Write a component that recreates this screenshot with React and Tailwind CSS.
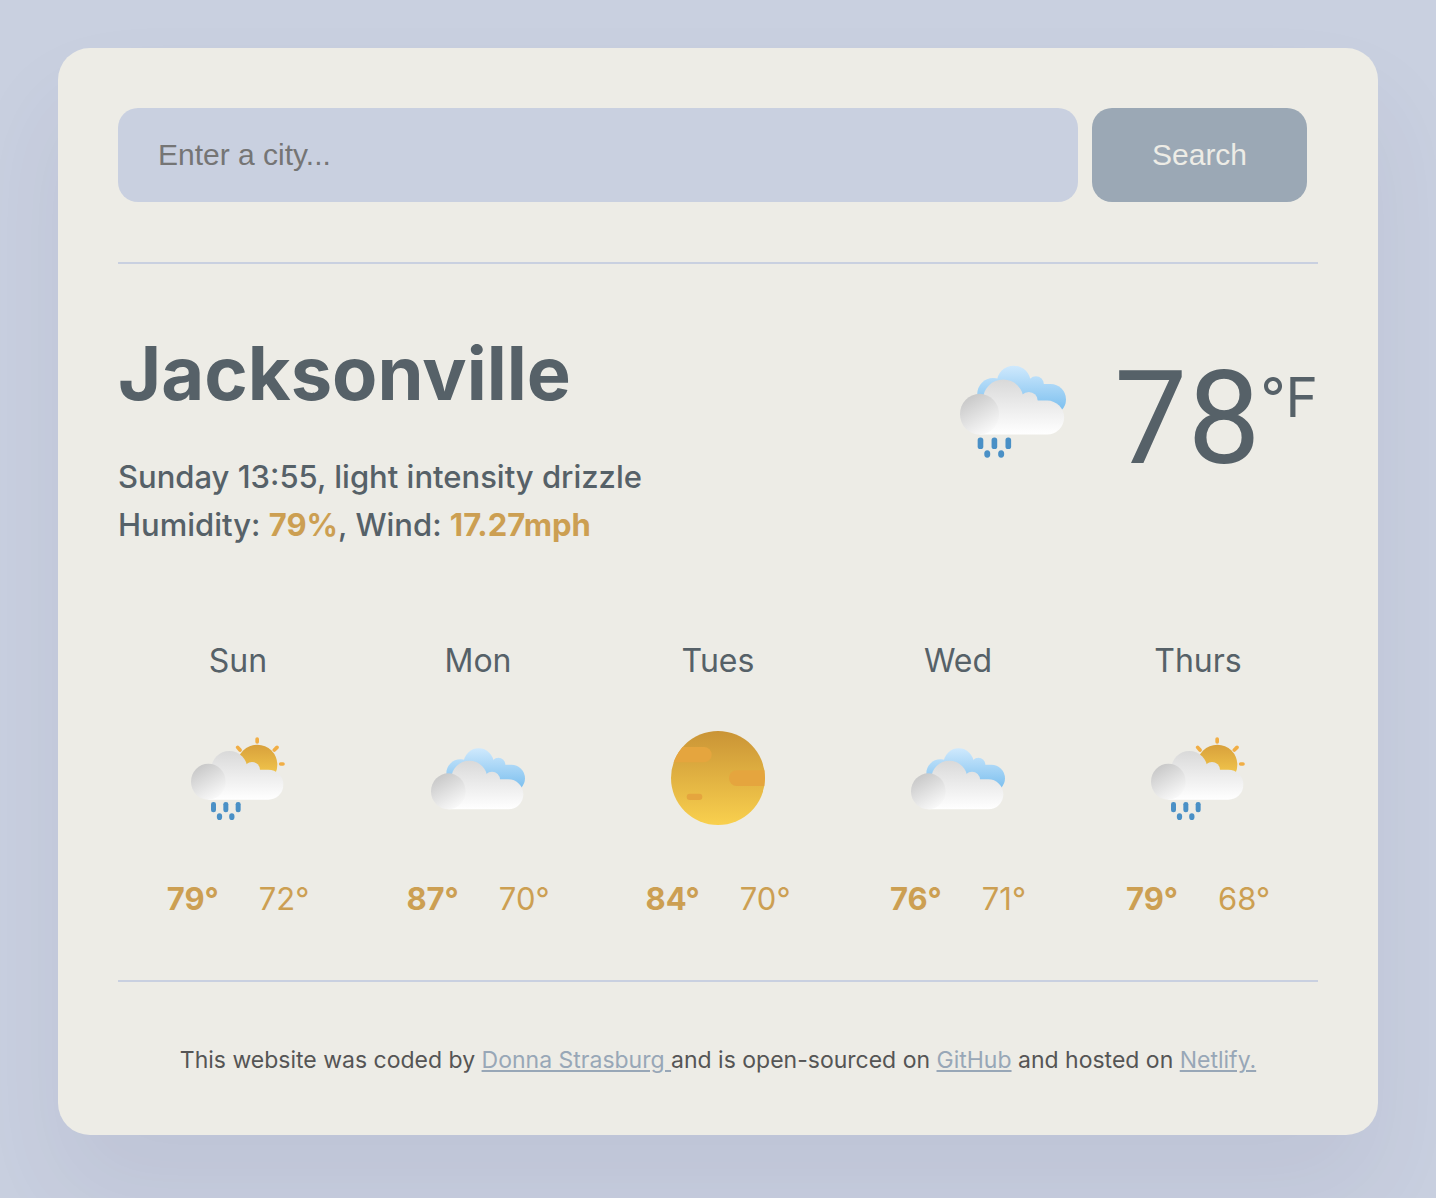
import React from "react";

const FORECAST = [
  { day: "Sun", icon: "sunRain", high: 79, low: 72 },
  { day: "Mon", icon: "clouds", high: 87, low: 70 },
  { day: "Tues", icon: "clear", high: 84, low: 70 },
  { day: "Wed", icon: "clouds", high: 76, low: 71 },
  { day: "Thurs", icon: "sunRain", high: 79, low: 68 },
];

function Gradients() {
  return (
    <svg className="absolute h-0 w-0" aria-hidden="true">
      <defs>
        <linearGradient id="cloudFront" gradientUnits="userSpaceOnUse" x1="0" y1="37" x2="0" y2="183">
          <stop offset="0" stopColor="#d9d9d9" />
          <stop offset="1" stopColor="#ffffff" />
        </linearGradient>
        <linearGradient id="cloudPuff" gradientUnits="userSpaceOnUse" x1="24" y1="84" x2="78" y2="176">
          <stop offset="0" stopColor="#c9c9c9" />
          <stop offset="1" stopColor="#f9f9f9" />
        </linearGradient>
        <linearGradient id="cloudBack" gradientUnits="userSpaceOnUse" x1="0" y1="0" x2="0" y2="115">
          <stop offset="0" stopColor="#cfe9fd" />
          <stop offset="1" stopColor="#7fc1ef" />
        </linearGradient>
        <linearGradient id="sunFill" gradientUnits="userSpaceOnUse" x1="0" y1="18" x2="0" y2="110">
          <stop offset="0" stopColor="#d8a03b" />
          <stop offset="1" stopColor="#f2c74c" />
        </linearGradient>
        <linearGradient id="clearFill" gradientUnits="userSpaceOnUse" x1="0" y1="0" x2="0" y2="282">
          <stop offset="0" stopColor="#ca9436" />
          <stop offset="1" stopColor="#f9d04e" />
        </linearGradient>
        <clipPath id="clearDisc">
          <circle cx="141" cy="141" r="141" />
        </clipPath>
      </defs>
    </svg>
  );
}

function FrontCloud() {
  return (
    <>
      <g fill="url(#cloudFront)">
        <circle cx="115" cy="91" r="54" />
        <circle cx="183" cy="94" r="24" />
        <path d="M52 93H232a45 45 0 0 1 0 90H52Z" />
      </g>
      <ellipse cx="52" cy="129" rx="52" ry="54" fill="url(#cloudPuff)" />
    </>
  );
}

function BackCloud() {
  return (
    <g fill="url(#cloudBack)">
      <circle cx="88" cy="75" r="42" />
      <circle cx="143" cy="45" r="45" />
      <circle cx="202" cy="49" r="21" />
      <path d="M88 49H241a41 41 0 0 1 0 82H88Z" />
    </g>
  );
}

function Rain({ transform }) {
  return (
    <g fill="#4a90c6" transform={transform}>
      <rect x="60" y="190" width="15" height="31" rx="7" />
      <rect x="97" y="190" width="15" height="31" rx="7" />
      <rect x="134" y="190" width="15" height="31" rx="7" />
      <ellipse cx="85.5" cy="234" rx="8" ry="10" />
      <ellipse cx="122.5" cy="234" rx="8" ry="10" />
    </g>
  );
}

function Sun() {
  return (
    <>
      <circle cx="199" cy="78" r="60" fill="url(#sunFill)" />
      <g stroke="#f1ae45" strokeWidth="11" strokeLinecap="round">
        <path d="M198.500 1V10M140 26L147 34M258 26L250 34M269 76H276" />
      </g>
    </>
  );
}

function WeatherIcon({ kind, className, label }) {
  const viewBox = {
    sunRain: "0 -23 282 282",
    rain: "0 -23 282 282",
    clouds: "0 -52 282 282",
    clear: "0 0 282 282",
  }[kind];
  return (
    <svg viewBox={viewBox} className={className} role="img" aria-label={label}>
      {kind === "clear" && (
        <>
          <circle cx="141" cy="141" r="141" fill="url(#clearFill)" />
          <g clipPath="url(#clearDisc)" fill="#e5a53e">
            <rect x="-30" y="48" width="152" height="46" rx="23" />
            <rect x="174" y="118" width="150" height="47" rx="23" />
            <rect x="47" y="188" width="47" height="19" rx="9" />
          </g>
        </>
      )}
      {kind === "sunRain" && <Sun />}
      {(kind === "clouds" || kind === "rain") && <BackCloud />}
      {kind !== "clear" && <FrontCloud />}
      {kind === "sunRain" && <Rain />}
      {kind === "rain" && <Rain transform="translate(-13 1)" />}
    </svg>
  );
}

function FooterLink({ href, children }) {
  return (
    <a href={href} className="text-[#98a7b7] underline">
      {children}
    </a>
  );
}

export default function App() {
  return (
    <div className="min-h-screen bg-[#c9d0e0] px-4 py-12 font-['Inter',sans-serif] text-[#566168]">
      <Gradients />
      <main className="mx-auto max-w-[1320px] rounded-[32px] bg-[#edece6] px-15 pt-15 pb-[57px] shadow-[0_60px_100px_rgba(65,50,100,0.08)]">
        <form className="flex gap-3.5 border-b-2 border-[#c9d0e0] pb-15" onSubmit={(e) => e.preventDefault()}>
          <input
            type="search"
            aria-label="City"
            placeholder="Enter a city..."
            className="h-[94px] w-4/5 rounded-[20px] bg-[#c9d0e0] px-10 font-['Liberation_Sans',sans-serif] text-[30px] outline-none placeholder:text-[#757575]"
          />
          <button
            type="submit"
            className="h-[94px] rounded-[20px] bg-[#9ba8b5] px-15 pb-0.5 font-['Liberation_Sans',sans-serif] text-[30px] text-[#edece6]"
          >
            Search
          </button>
        </form>

        <section className="flex items-start justify-between pt-[61px]">
          <div>
            <h1 className="text-[74px] leading-[96px] font-bold">Jacksonville</h1>
            <p className="mt-8 text-[31px] leading-[48px] font-medium">
              Sunday 13:55, light intensity drizzle
              <br />
              Humidity: <strong className="font-bold text-[#cc9f52]">79%</strong>, Wind:{" "}
              <strong className="font-bold text-[#cc9f52]">17.27mph</strong>
            </p>
          </div>
          <div className="flex items-start pt-8">
            <WeatherIcon kind="rain" label="Light intensity drizzle" className="mr-12 size-[106px]" />
            <span className="font-['Roboto',sans-serif] text-[130px] leading-[124px]">78</span>
            <span className="pt-2 text-[55px] leading-[64px]">°F</span>
          </div>
        </section>

        <ul className="mt-22 grid grid-cols-5 border-b-2 border-[#c9d0e0] pb-[57px] text-center leading-[48px]">
          {FORECAST.map(({ day, icon, high, low }) => (
            <li key={day} className="flex flex-col items-center">
              <span className="text-[32px] leading-[48px]">{day}</span>
              <WeatherIcon kind={icon} label={day + " forecast"} className="mt-[46px] mb-[50px] size-[94px]" />
              <div className="flex gap-10 text-[31px] leading-[48px] text-[#cc9f52]">
                <span className="font-bold">{high}°</span>
                <span>{low}°</span>
              </div>
            </li>
          ))}
        </ul>

        <footer className="pt-15 text-center text-[23px] leading-[36px] text-[#555555]">
          This website was coded by <FooterLink href="#author">Donna Strasburg </FooterLink>
          and is open-sourced on <FooterLink href="#github">GitHub</FooterLink> and hosted on{" "}
          <FooterLink href="#netlify">Netlify.</FooterLink>
        </footer>
      </main>
    </div>
  );
}
